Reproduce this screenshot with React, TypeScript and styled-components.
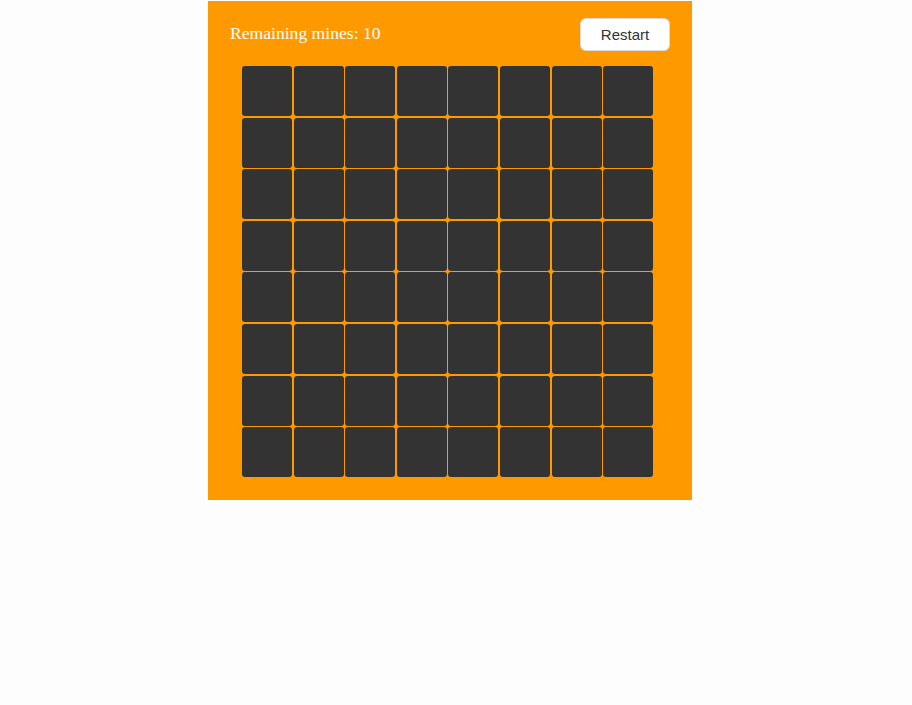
import React, { useState } from 'react'
import styled, { createGlobalStyle } from 'styled-components'

const GlobalStyle = createGlobalStyle`
    html, body {
        margin: 0;
        padding: 0;
        background: #fdfdfd;
    }
`

const Page = styled.div`
    padding: 1px 0 0 208px;
    min-height: 704px;
    box-sizing: border-box;
`

const Board = styled.section`
    width: 484px;
    height: 499px;
    background: #ff9900;
    box-sizing: border-box;
    padding: 17px 22px 0 22px;
`

const Header = styled.header`
    display: flex;
    justify-content: space-between;
    align-items: center;
    height: 33px;
`

const Counter = styled.span`
    font-family: 'Liberation Serif', 'Times New Roman', serif;
    font-size: 17.6px;
    color: #fff;
    margin-top: -2px;
`

const RestartButton = styled.button`
    width: 90px;
    height: 33px;
    background: #fff;
    border: 1px solid #d9d9d9;
    border-radius: 6px;
    font-family: 'Liberation Sans', Arial, sans-serif;
    font-size: 15px;
    color: #333;
    cursor: pointer;
    padding: 0;
`

const Grid = styled.div`
    display: grid;
    grid-template-columns: repeat(8, 50px);
    grid-auto-rows: 50px;
    gap: 1.6px;
    margin: 15px 0 0 12px;
`

const Cell = styled.div<{ $open?: boolean }>`
    background: ${(p) => (p.$open ? '#777' : '#333')};
    border-radius: 3px;
`

const SIZE = 8

const App = () => {
    const [mines] = useState(10)
    const cells = Array.from({ length: SIZE * SIZE }, (_, i) => i)

    return (
        <Page>
            <GlobalStyle />
            <Board>
                <Header>
                    <Counter>Remaining mines: {mines}</Counter>
                    <RestartButton>Restart</RestartButton>
                </Header>
                <Grid>
                    {cells.map((i) => (
                        <Cell key={i} />
                    ))}
                </Grid>
            </Board>
        </Page>
    )
}

export default App
